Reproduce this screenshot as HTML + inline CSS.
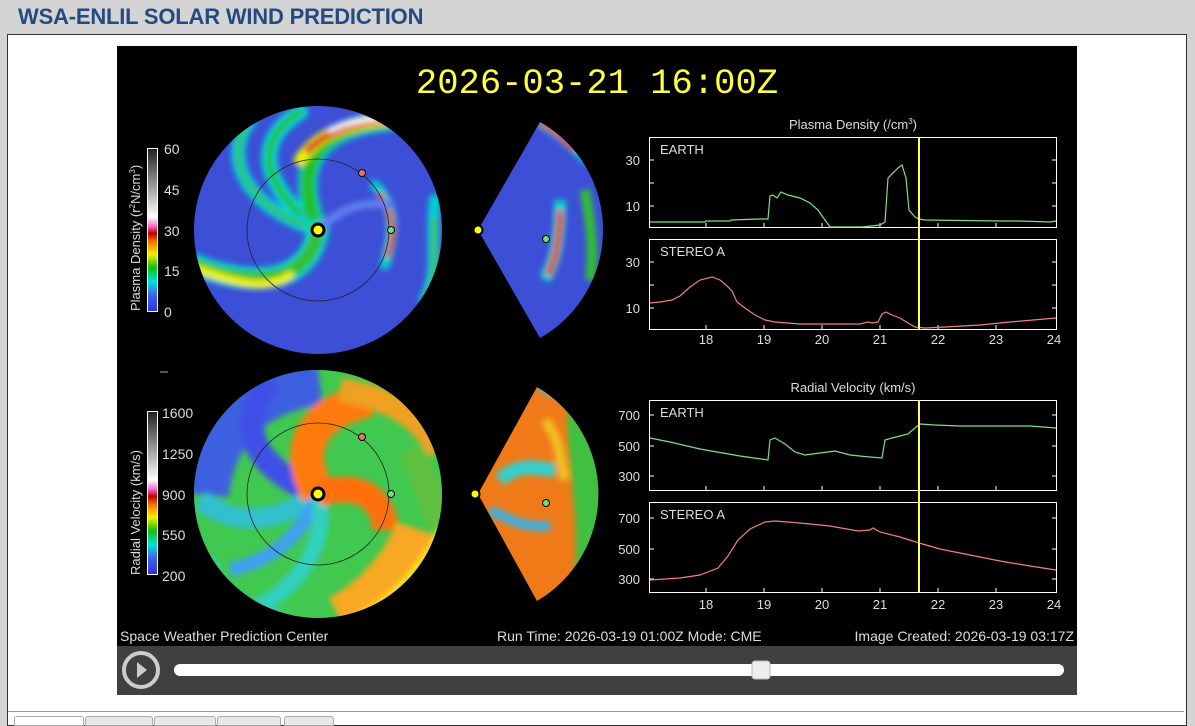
<!DOCTYPE html>
<html><head><meta charset="utf-8"><style>
html,body{margin:0;padding:0;width:1195px;height:721px;overflow:hidden;background:#d4d4d4;font-family:"Liberation Sans",sans-serif}
.title{position:absolute;left:18px;top:4px;font-size:22px;font-weight:bold;color:#254a82;letter-spacing:-0.2px}
.panel{position:absolute;left:7px;top:34px;width:1178px;height:690px;background:#fff;border:1px solid #333}
.tabs{position:absolute;left:8px;top:711px;width:1176px;height:12px;background:#fff;border-top:1px solid #999}
.tab{position:absolute;top:716px;height:8px;background:#e8e8e8;border:1px solid #aaa;border-radius:3px 3px 0 0}
</style></head><body>
<div class="title">WSA-ENLIL SOLAR WIND PREDICTION</div>
<div class="panel"></div>
<svg style="position:absolute;left:0;top:0" width="1195" height="721" font-family="Liberation Sans, sans-serif">
<defs>
<filter id="bl" x="-20%" y="-20%" width="140%" height="140%"><feGaussianBlur stdDeviation="3"/></filter>
<clipPath id="c1"><circle cx="318" cy="230" r="124"/></clipPath>
<clipPath id="w1"><path d="M478,230 L540,122 A124,124 0 0 1 540,338 Z"/></clipPath>
<clipPath id="c2"><circle cx="318" cy="494" r="124"/></clipPath>
<clipPath id="w2"><path d="M478,494 L537,387 A124,124 0 0 1 537,601 Z"/></clipPath>
<linearGradient id="cb1" x1="0" y1="1" x2="0" y2="0">
<stop offset="0" stop-color="#3030e0"/><stop offset=".1" stop-color="#4060f0"/><stop offset=".18" stop-color="#00e0e0"/><stop offset=".27" stop-color="#10c010"/><stop offset=".35" stop-color="#f0f000"/><stop offset=".42" stop-color="#ff8000"/><stop offset=".48" stop-color="#c00000"/><stop offset=".52" stop-color="#ff60c0"/><stop offset=".58" stop-color="#fff"/><stop offset="1" stop-color="#202020"/></linearGradient>
</defs>
<rect x="117" y="46" width="960" height="600" fill="#000"/>
<rect x="117" y="646" width="960" height="49" fill="#404040"/>
<circle cx="141" cy="670" r="17" fill="none" stroke="#ccc" stroke-width="4"/>
<path d="M137,662 L147,670 L137,678 Z" fill="#ccc"/>
<rect x="174" y="664" width="890" height="12" rx="6" fill="#fff"/>
<rect x="752" y="661" width="18" height="18" rx="3" fill="#eee" stroke="#bbb"/>
<text x="597" y="93" fill="#ffff44" font-family="Liberation Mono, monospace" font-size="35.5" text-anchor="middle">2026-03-21 16:00Z</text>
<!-- density disc -->
<g clip-path="url(#c1)">
<rect x="190" y="100" width="260" height="260" fill="#3c4fd6"/>
<g filter="url(#bl)" fill="none" stroke-linecap="round">
<path d="M318,230 C280,200 240,150 300,112" stroke="#00d8d8" stroke-width="16"/>
<path d="M318,230 C280,200 240,150 300,112" stroke="#20c020" stroke-width="7"/>
<path d="M318,230 C250,210 220,160 250,120" stroke="#00d0d8" stroke-width="14"/>
<path d="M318,230 C250,210 220,160 250,120" stroke="#30c030" stroke-width="5"/>
<path d="M318,230 C290,160 320,125 400,120" stroke="#00d0d0" stroke-width="20"/>
<path d="M318,230 C290,160 320,125 400,120" stroke="#20c020" stroke-width="14"/>
<path d="M300,160 C320,130 350,122 420,116" stroke="#f0f000" stroke-width="12"/>
<path d="M308,150 C330,128 360,122 420,114" stroke="#e02020" stroke-width="7"/>
<path d="M330,130 C350,120 380,118 420,112" stroke="#fff" stroke-width="5"/>
<path d="M318,230 C310,280 260,290 195,265" stroke="#00d8d0" stroke-width="22"/>
<path d="M318,230 C310,280 260,290 195,265" stroke="#30c030" stroke-width="14"/>
<path d="M290,275 C270,290 240,285 195,268" stroke="#f0f000" stroke-width="8"/>
<path d="M375,185 C395,205 395,230 385,265" stroke="#00d0d0" stroke-width="10"/>
<path d="M380,195 C395,215 395,235 388,255" stroke="#e03010" stroke-width="5"/>
<path d="M435,200 C430,240 440,270 425,300" stroke="#00d0d0" stroke-width="12"/>
<path d="M435,220 C432,250 438,270 428,295" stroke="#40c040" stroke-width="5"/>
<path d="M318,230 C340,210 360,200 390,205" stroke="#6080f0" stroke-width="8"/>
</g>
</g>
<circle cx="318" cy="230" r="71" fill="none" stroke="#222" stroke-width="0.8"/>
<circle cx="318" cy="230" r="6" fill="#ff0" stroke="#000" stroke-width="3"/>
<circle cx="362" cy="173" r="3.5" fill="#f07070" stroke="#000"/>
<circle cx="391" cy="230" r="3.5" fill="#70e070" stroke="#000"/>
<!-- density wedge -->
<g clip-path="url(#w1)">
<rect x="470" y="115" width="140" height="230" fill="#3c4fd6"/>
<g filter="url(#bl)" fill="none">
<path d="M540,120 C560,130 575,145 590,160" stroke="#00d0d0" stroke-width="14"/>
<path d="M540,122 C555,130 565,140 575,150" stroke="#e03010" stroke-width="6"/>
<path d="M560,200 C560,240 555,260 545,280" stroke="#00d0d0" stroke-width="12"/>
<path d="M560,210 C560,240 555,260 548,275" stroke="#e02010" stroke-width="6"/>
<path d="M585,190 C590,220 595,250 590,280" stroke="#30c030" stroke-width="10"/>
</g>
</g>
<circle cx="478" cy="230" r="4.5" fill="#ff0" stroke="#000" stroke-width="2"/>
<circle cx="546" cy="239" r="3.5" fill="#70e070" stroke="#000"/>
<!-- velocity disc -->
<g clip-path="url(#c2)">
<rect x="190" y="365" width="260" height="260" fill="#40c850"/>
<g filter="url(#bl)" fill="none">
<path d="M194,494 C200,430 240,380 318,370" stroke="#3c60e0" stroke-width="70"/>
<path d="M200,560 C210,600 240,620 280,625" stroke="#30d0d0" stroke-width="30"/>
<path d="M318,494 C260,470 230,430 270,380" stroke="#4050e8" stroke-width="24"/>
<path d="M318,494 C280,520 240,530 200,500" stroke="#30c0d0" stroke-width="20"/>
<path d="M318,494 C300,540 270,560 230,570" stroke="#40a0f0" stroke-width="14"/>
<path d="M318,494 C330,540 300,590 250,610" stroke="#30d0c0" stroke-width="16"/>
<path d="M318,494 C290,440 320,410 370,400" stroke="#ff7a10" stroke-width="34"/>
<path d="M340,390 C400,400 420,420 440,450" stroke="#f0a020" stroke-width="24"/>
<path d="M318,494 C360,480 385,500 385,530" stroke="#ff7010" stroke-width="26"/>
<path d="M340,620 C380,600 410,560 420,530" stroke="#f8a820" stroke-width="50"/>
<path d="M360,620 C400,600 430,560 445,530" stroke="#ffe020" stroke-width="14"/>
<path d="M410,450 C430,480 430,510 440,520" stroke="#60c040" stroke-width="26"/>
</g>
</g>
<circle cx="318" cy="494" r="71" fill="none" stroke="#222" stroke-width="0.8"/>
<circle cx="318" cy="494" r="6" fill="#ff0" stroke="#000" stroke-width="3"/>
<circle cx="362" cy="437" r="3.5" fill="#f07070" stroke="#000"/>
<circle cx="391" cy="494" r="3.5" fill="#70e070" stroke="#000"/>
<g clip-path="url(#w2)">
<rect x="470" y="380" width="140" height="230" fill="#f07a18"/>
<g filter="url(#bl)" fill="none">
<path d="M500,480 C520,460 540,470 555,470" stroke="#30d0d0" stroke-width="14"/>
<path d="M490,510 C510,520 530,530 550,525" stroke="#40b0e0" stroke-width="10"/>
<path d="M585,400 C580,450 600,520 590,580" stroke="#40c040" stroke-width="34"/>
<path d="M540,385 C550,390 560,395 570,400" stroke="#30c0d0" stroke-width="10"/>
<path d="M545,420 C560,440 560,460 565,480" stroke="#f0c020" stroke-width="10"/>
</g>
</g>
<circle cx="475" cy="494" r="4.5" fill="#ff0" stroke="#000" stroke-width="2"/>
<circle cx="546" cy="503" r="3.5" fill="#70e070" stroke="#000"/>
<!-- colorbars -->
<rect x="147.5" y="148.5" width="10" height="163" fill="url(#cb1)" stroke="#fff"/>
<rect x="147.5" y="411.5" width="10" height="163" fill="url(#cb1)" stroke="#fff"/>
<g fill="#ddd" font-size="14">
<text x="164" y="154">60</text><text x="164" y="195">45</text><text x="164" y="236">30</text><text x="164" y="276">15</text><text x="164" y="317">0</text>
<text x="162" y="418">1600</text><text x="162" y="459">1250</text><text x="162" y="500">900</text><text x="162" y="540">550</text><text x="162" y="581">200</text>
</g>
<text transform="translate(140,311) rotate(-90)" fill="#ddd" font-size="13">Plasma Density (r<tspan font-size="8" dy="-5">2</tspan><tspan dy="5">N/cm</tspan><tspan font-size="8" dy="-5">3</tspan><tspan dy="5">)</tspan></text>
<text transform="translate(140,575) rotate(-90)" fill="#ddd" font-size="13">Radial Velocity (km/s)</text>
<line x1="160" y1="372" x2="168" y2="372" stroke="#aaa"/>
<!-- plots -->
<g fill="none" stroke="#fff" stroke-width="1">
<rect x="649.5" y="137.5" width="407" height="90"/>
<rect x="649.5" y="239.5" width="407" height="90"/>
<rect x="649.5" y="400.5" width="407" height="90"/>
<rect x="649.5" y="502.5" width="407" height="90"/>
</g>
<g fill="#ddd" font-size="13">
<text x="853" y="129" text-anchor="middle">Plasma Density (/cm<tspan font-size="8" dy="-5">3</tspan><tspan dy="5">)</tspan></text>
<text x="853" y="392" text-anchor="middle">Radial Velocity (km/s)</text>
<text x="660" y="154">EARTH</text><text x="660" y="256">STEREO A</text>
<text x="660" y="417">EARTH</text><text x="660" y="519">STEREO A</text>
<g text-anchor="end">
<text x="640" y="165">30</text><text x="640" y="211">10</text><text x="640" y="267">30</text><text x="640" y="313">10</text>
<text x="640" y="420">700</text><text x="640" y="451">500</text><text x="640" y="481">300</text>
<text x="640" y="523">700</text><text x="640" y="554">500</text><text x="640" y="584">300</text>
</g>
<g text-anchor="middle">
<text x="706" y="344">18</text><text x="764" y="344">19</text><text x="822" y="344">20</text><text x="880" y="344">21</text><text x="938" y="344">22</text><text x="996" y="344">23</text><text x="1054" y="344">24</text>
<text x="706" y="609">18</text><text x="764" y="609">19</text><text x="822" y="609">20</text><text x="880" y="609">21</text><text x="938" y="609">22</text><text x="996" y="609">23</text><text x="1054" y="609">24</text>
</g>
</g>
<g stroke="#fff" stroke-width="1">
<path d="M706,227v-4M764,227v-4M822,227v-4M880,227v-4M938,227v-4M996,227v-4M706,329v-4M764,329v-4M822,329v-4M880,329v-4M938,329v-4M996,329v-4M706,490v-4M764,490v-4M822,490v-4M880,490v-4M938,490v-4M996,490v-4M706,592v-4M764,592v-4M822,592v-4M880,592v-4M938,592v-4M996,592v-4"/>
<path d="M650,160h4M650,183h4M650,206h4M650,262h4M650,285h4M650,308h4M1056,160h-4M1056,183h-4M1056,206h-4M1056,262h-4M1056,285h-4M1056,308h-4M650,415h4M650,446h4M650,476h4M650,518h4M650,549h4M650,579h4M1056,415h-4M1056,446h-4M1056,476h-4M1056,518h-4M1056,549h-4M1056,579h-4"/>
</g>
<g fill="none" stroke-width="1.2">
<polyline stroke="#80e080" points="650,222 705,222 706,221 730,221 731,220 760,219 768,219 770,196 773,195 777,198 781,192 788,195 800,198 810,203 818,210 825,220 830,227 862,227 880,225 885,222 888,178 898,168 902,165 906,178 909,210 915,217 919,219 925,220 1000,221 1020,221 1050,222 1056,221"/>
<polyline stroke="#f08080" points="650,303 660,302 672,300 680,296 690,287 700,280 712,277 720,280 726,285 732,291 737,302 745,308 755,315 765,320 775,322 800,324 860,324 868,322 872,323 878,322 882,314 886,312 892,315 900,318 908,323 915,327 925,328 945,327 980,325 1010,322 1056,318"/>
<polyline stroke="#80e080" points="650,438 670,442 700,449 740,456 768,460 770,440 775,438 785,444 795,452 805,455 820,453 835,451 850,455 870,457 882,458 885,440 892,438 900,436 908,434 915,428 920,424 935,425 960,426 1000,426 1030,426 1056,428"/>
<polyline stroke="#f08080" points="650,580 680,578 700,575 718,568 728,556 738,540 750,529 765,522 775,521 800,523 830,526 858,531 870,530 873,528 880,532 900,537 919,543 940,549 960,553 1000,561 1030,566 1056,570"/>
</g>
<line x1="919" y1="137" x2="919" y2="330" stroke="#ffff55" stroke-width="2"/>
<line x1="919" y1="400" x2="919" y2="593" stroke="#ffff55" stroke-width="2"/>
<g fill="#ddd" font-size="14">
<text x="120" y="641">Space Weather Prediction Center</text>
<text x="497" y="641">Run Time: 2026-03-19 01:00Z  Mode: CME</text>
<text x="1074" y="641" text-anchor="end">Image Created: 2026-03-19 03:17Z</text>
</g>
</svg>
<div class="tabs"></div>
<div class="tab" style="left:14px;width:68px;background:#fff"></div>
<div class="tab" style="left:85px;width:66px"></div>
<div class="tab" style="left:154px;width:60px"></div>
<div class="tab" style="left:217px;width:62px"></div>
<div class="tab" style="left:284px;width:48px"></div>
</body></html>
